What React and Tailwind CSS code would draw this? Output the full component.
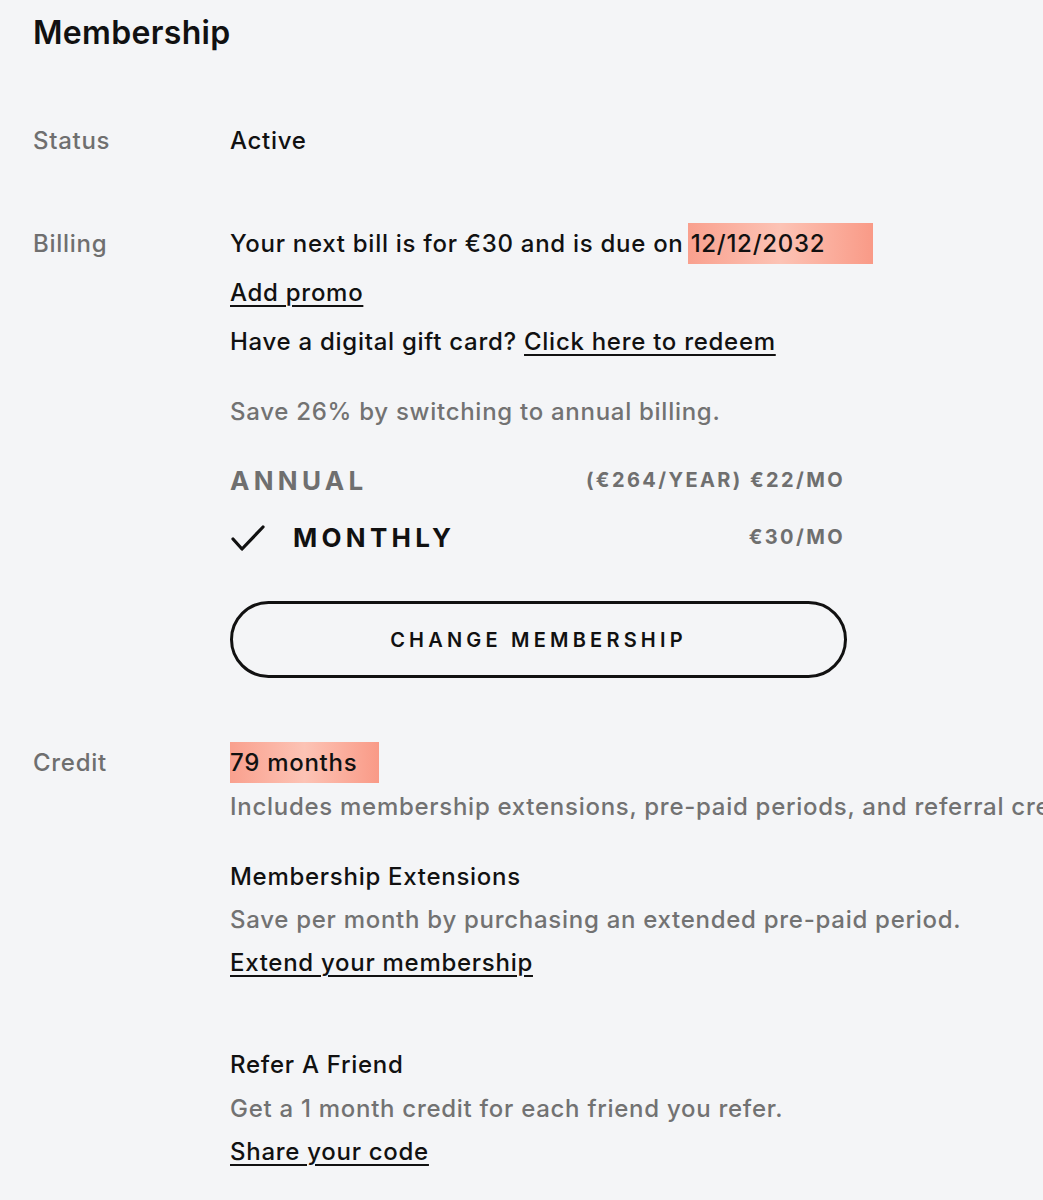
import React from "react";

const Highlight = ({ children, extra }) => (
  <span className={`inline-block bg-gradient-to-r from-[#f9a08e] via-[#fcc3b5] to-[#f99a87] ${extra}`}>
    {children}
  </span>
);

const Check = () => (
  <svg width="36" height="28" viewBox="0 0 36 28" fill="none" className="shrink-0">
    <polyline points="3,15 12,25 33,3" stroke="#111" strokeWidth="3.2" strokeLinecap="round" strokeLinejoin="round" />
  </svg>
);

const Row = ({ label, children, className = "" }) => (
  <div className={`flex ${className}`}>
    <div className="w-[197px] shrink-0 text-[#6f6f6f]">{label}</div>
    <div className="flex-1 min-w-0">{children}</div>
  </div>
);

export default function App() {
  return (
    <div
      className="w-[1043px] h-[1200px] overflow-hidden bg-[#f4f5f7] pl-[33px] pt-[13px] text-[24px] font-medium tracking-[0.03em] text-[#111] whitespace-nowrap"
      style={{ fontFamily: "Inter, 'Noto Sans', sans-serif" }}
    >
      <h1 className="text-[32px] leading-[40px] font-semibold tracking-[0.01em]">Membership</h1>

      <Row label="Status" className="mt-[68px] leading-[40px]">
        Active
      </Row>

      <Row label="Billing" className="mt-[58px] leading-[49px]">
        <div>
          Your next bill is for €30 and is due on{" "}
          <Highlight extra="leading-[41px] pl-[3px] pr-[48px] -ml-[3px]">12/12/2032</Highlight>
        </div>
        <div>
          <a className="underline decoration-2 underline-offset-4">Add promo</a>
        </div>
        <div>
          Have a digital gift card?{" "}
          <a className="underline decoration-2 underline-offset-4">Click here to redeem</a>
        </div>
        <div className="mt-[21px] text-[#727272]">Save 26% by switching to annual billing.</div>

        <div className="w-[615px] mt-[16px]">
          <div className="h-[57px] flex items-center justify-between">
            <span className="text-[26px] font-bold tracking-[0.165em] text-[#6f6f6f]">ANNUAL</span>
            <span className="text-[20px] font-bold tracking-[0.12em] text-[#6f6f6f]">(€264/YEAR) €22/MO</span>
          </div>
          <div className="h-[57px] flex items-center justify-between">
            <span className="flex items-center gap-[27px]">
              <Check />
              <span className="text-[26px] font-bold tracking-[0.165em]">MONTHLY</span>
            </span>
            <span className="text-[20px] font-bold tracking-[0.12em] text-[#6f6f6f]">€30/MO</span>
          </div>
        </div>

        <button className="mt-[35px] w-[617px] h-[77px] rounded-full border-[3px] border-[#111] text-[20px] font-semibold tracking-[0.21em] leading-none">
          CHANGE MEMBERSHIP
        </button>
      </Row>

      <Row label="Credit" className="mt-[63px] leading-[44px]">
        <div>
          <Highlight extra="leading-[41px] pr-[22px]">79 months</Highlight>
        </div>
        <div className="text-[#727272]">
          Includes membership extensions, pre-paid periods, and referral credits.
        </div>

        <div className="mt-[26px] leading-[43px]">
          <div>Membership Extensions</div>
          <div className="text-[#727272]">Save per month by purchasing an extended pre-paid period.</div>
          <div>
            <a className="underline decoration-2 underline-offset-4">Extend your membership</a>
          </div>
        </div>

        <div className="mt-[59px] leading-[43.5px]">
          <div>Refer A Friend</div>
          <div className="text-[#727272]">Get a 1 month credit for each friend you refer.</div>
          <div>
            <a className="underline decoration-2 underline-offset-4">Share your code</a>
          </div>
        </div>
      </Row>
    </div>
  );
}
